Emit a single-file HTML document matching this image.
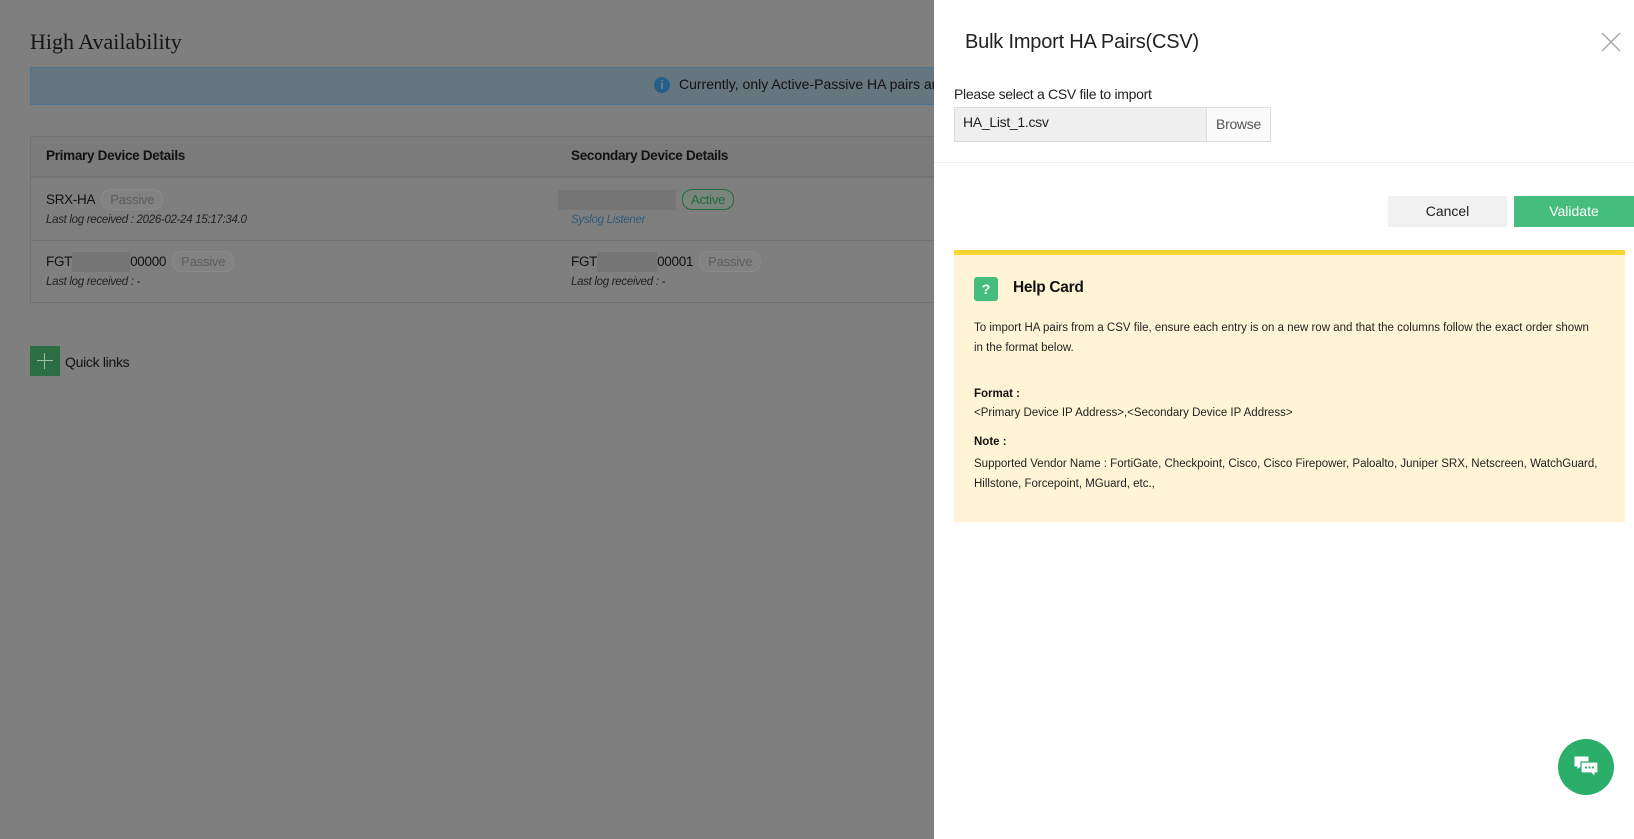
<!DOCTYPE html>
<html><head><meta charset="utf-8"><style>
*{box-sizing:border-box;margin:0;padding:0}
body{width:1634px;height:839px;overflow:hidden;background:#7f7f7f;font-family:"Liberation Sans",sans-serif;position:relative;color:#111}
.a{position:absolute}
.pill{display:inline-block;border:1px solid #8a8a8a;background:#828282;color:#5e5e5e;border-radius:10px;padding:0 8px;font-size:13px;line-height:19px;margin-left:6px;letter-spacing:-0.2px}
.blur{display:inline-block;background:#757575;height:20px;vertical-align:middle}
.it{font-style:italic;font-size:11.5px;color:#222;letter-spacing:-0.3px}
.h{font-size:11.5px;letter-spacing:0;color:#222}
</style></head><body>
<div class="a" style="left:30px;top:29px;font-family:'Liberation Serif',serif;font-size:22px;color:#151515">High Availability</div>
<div class="a" style="left:30px;top:67px;width:920px;height:38px;background:#66767e;border:1px solid #4f7690"></div>
<div class="a" style="left:654px;top:77px;width:16px;height:16px;border-radius:50%;background:#24608c;color:#7f7f7f;font-size:12px;font-weight:bold;text-align:center;line-height:16px">i</div>
<div class="a" style="left:679px;top:76px;font-size:14px;color:#111;white-space:nowrap">Currently, only Active-Passive HA pairs ar</div>
<div class="a" style="left:30px;top:136px;width:920px;height:167px;border:1px solid #727272;background:#7f7f7f"></div>
<div class="a" style="left:31px;top:137px;width:910px;height:41px;background:#7b7b7b;border-bottom:2px solid #737373"></div>
<div class="a" style="left:46px;top:148px;font-size:13.5px;font-weight:bold;letter-spacing:-0.3px">Primary Device Details</div>
<div class="a" style="left:571px;top:148px;font-size:13.5px;font-weight:bold;letter-spacing:-0.3px">Secondary Device Details</div>
<div class="a" style="left:31px;top:240px;width:910px;height:1px;background:#737373"></div>
<div class="a" style="left:46px;top:189px;font-size:13.5px;letter-spacing:-0.3px">SRX-HA<span class="pill">Passive</span></div>
<div class="a it" style="left:46px;top:214px">Last log received : 2026-02-24 15:17:34.0</div>
<div class="a" style="left:558px;top:189px;font-size:13.5px"><span class="blur" style="width:118px"></span><span class="pill" style="border-color:#1d6b3a;color:#1d6b3a;background:#7a857d;margin-left:6px">Active</span></div>
<div class="a it" style="left:571px;top:214px;color:#2f5a7a">Syslog Listener</div>
<div class="a" style="left:46px;top:251px;font-size:13.5px;letter-spacing:-0.3px">FGT<span class="blur" style="width:58px"></span>00000<span class="pill">Passive</span></div>
<div class="a it" style="left:46px;top:276px">Last log received : -</div>
<div class="a" style="left:571px;top:251px;font-size:13.5px;letter-spacing:-0.3px">FGT<span class="blur" style="width:60px"></span>00001<span class="pill">Passive</span></div>
<div class="a it" style="left:571px;top:276px">Last log received : -</div>
<div class="a" style="left:30px;top:346px;width:30px;height:30px;background:#2b6e43"></div>
<div class="a" style="left:37px;top:360px;width:16px;height:1px;background:#9cbfa8"></div>
<div class="a" style="left:44px;top:353px;width:1px;height:16px;background:#9cbfa8"></div>
<div class="a" style="left:65px;top:354px;font-size:14px;letter-spacing:-0.3px">Quick links</div>

<div class="a" style="left:934px;top:0;width:700px;height:839px;background:#fff"></div>
<div class="a" style="left:965px;top:31px;font-size:20px;color:#222;letter-spacing:-0.2px">Bulk Import HA Pairs(CSV)</div>
<svg class="a" style="left:1600px;top:31px" width="22" height="22"><path d="M2 2L20 20M20 2L2 20" stroke="#aaa" stroke-width="1.5"/></svg>
<div class="a" style="left:954px;top:86px;font-size:14px;color:#222;letter-spacing:-0.3px">Please select a CSV file to import</div>
<div class="a" style="left:954px;top:107px;width:317px;height:35px;border:1px solid #ddd;background:#efefef"></div>
<div class="a" style="left:1206px;top:108px;width:64px;height:33px;background:#fafafa;border-left:1px solid #ddd;font-size:14px;color:#555;text-align:center;line-height:33px;letter-spacing:-0.3px">Browse</div>
<div class="a" style="left:963px;top:114px;font-size:14px;color:#222;letter-spacing:-0.3px">HA_List_1.csv</div>
<div class="a" style="left:934px;top:162px;width:700px;height:1px;background:#eee"></div>
<div class="a" style="left:1388px;top:196px;width:119px;height:31px;background:#f1f1f1;font-size:14px;text-align:center;line-height:31px;color:#222">Cancel</div>
<div class="a" style="left:1514px;top:196px;width:120px;height:31px;background:#44bd7d;font-size:14px;text-align:center;line-height:31px;color:#fff">Validate</div>
<div class="a" style="left:954px;top:250px;width:671px;height:272px;background:#fff5d6;border-top:5px solid #fdd535"></div>
<div class="a" style="left:974px;top:277px;width:24px;height:24px;border-radius:3px;background:#44bd7d;color:#fff;font-weight:bold;font-size:14px;text-align:center;line-height:24px">?</div>
<div class="a" style="left:1013px;top:279px;font-size:15.5px;font-weight:bold;color:#111;letter-spacing:-0.3px">Help Card</div>
<div class="a h" style="left:974px;top:319px;width:620px;line-height:19.5px">To import HA pairs from a CSV file, ensure each entry is on a new row and that the columns follow the exact order shown in the format below.</div>
<div class="a h" style="left:974px;top:388px;font-weight:bold;color:#111">Format :</div>
<div class="a h" style="left:974px;top:407px">&lt;Primary Device IP Address&gt;,&lt;Secondary Device IP Address&gt;</div>
<div class="a h" style="left:974px;top:436px;font-weight:bold;color:#111">Note :</div>
<div class="a h" style="left:974px;top:455px;width:650px;line-height:19.5px">Supported Vendor Name : FortiGate, Checkpoint, Cisco, Cisco Firepower, Paloalto, Juniper SRX, Netscreen, WatchGuard, Hillstone, Forcepoint, MGuard, etc.,</div>
<div class="a" style="left:1558px;top:739px;width:56px;height:56px;border-radius:50%;background:#2aae6a"></div>
<svg class="a" style="left:1572px;top:753px" width="28" height="28" viewBox="0 0 28 28"><path d="M2 3h15v11H9l-4 3v-3H2z" fill="#fff" stroke="#2aae6a" stroke-width="1"/><path d="M9 9h17v11h-3v4l-4-4H9z" fill="#fff" stroke="#2aae6a" stroke-width="1.2"/><circle cx="14" cy="14.5" r="1.1" fill="#2aae6a"/><circle cx="17.5" cy="14.5" r="1.1" fill="#2aae6a"/><circle cx="21" cy="14.5" r="1.1" fill="#2aae6a"/></svg>
</body></html>
